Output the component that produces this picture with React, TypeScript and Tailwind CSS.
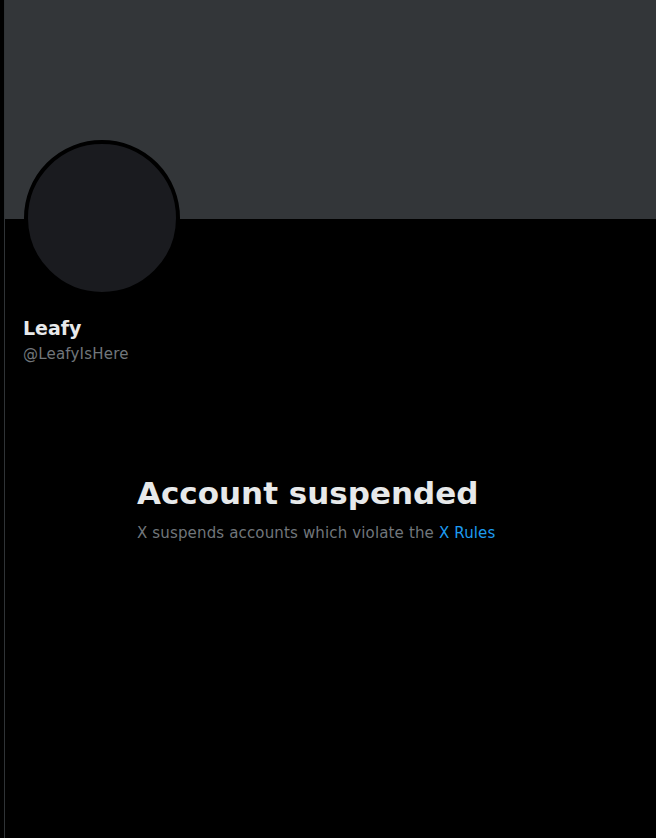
export default function App() {
  return (
    <div
      className="min-h-[838px] w-[656px] bg-black pl-1"
      style={{ fontFamily: '"DejaVu Sans", "Liberation Sans", sans-serif' }}
    >
      <div className="min-h-[838px] border-l border-[#2f3336]">
        <div className="h-[219px] bg-[#333639]" />
        <div className="px-[19px]">
          <div className="-mt-[79px] h-[156px] w-[156px] rounded-full border-4 border-black bg-[#1a1b1f]" />
          <div className="-ml-px mt-5">
            <div className="text-[19px] font-bold leading-6 text-[#e7e9ea]">Leafy</div>
            <div className="mt-1 text-[15px] leading-5 tracking-[0.2px] text-[#71767b]">@LeafyIsHere</div>
          </div>
        </div>
        <div className="mt-[111px] pl-[132px]">
          <h1 className="text-[31px] font-bold leading-9 text-[#e7e9ea]">Account suspended</h1>
          <p className="mt-3 text-[15px] leading-5 tracking-[0.15px] text-[#71767b]">
            X suspends accounts which violate the <span className="text-[#1d9bf0]">X Rules</span>
          </p>
        </div>
      </div>
    </div>
  );
}
